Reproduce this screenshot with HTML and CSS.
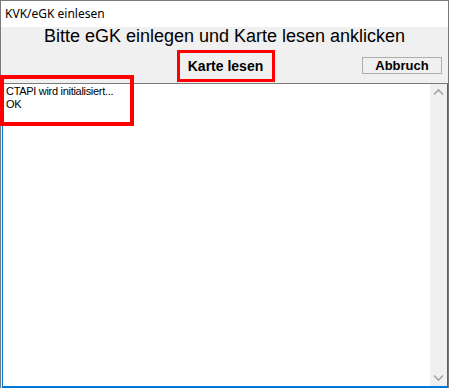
FILE: index.html
```html
<!DOCTYPE html>
<html lang="de">
<head>
  <meta charset="UTF-8">
  <title>KVK/eGK einlesen</title>
  <link rel="stylesheet" href="styles.css">
</head>
<body>
  <div class="window">
    <div class="titlebar">KVK/eGK einlesen</div>
    <div class="panel">
      <h1 class="prompt">Bitte eGK einlegen und Karte lesen anklicken</h1>
      <div class="actions">
        <button class="btn-read">Karte lesen</button>
        <button class="btn-cancel">Abbruch</button>
      </div>
    </div>
    <div class="log">
      <div class="log-text">
        <div>CTAPI wird initialisiert...</div>
        <div>OK</div>
      </div>
      <div class="scrollbar">
        <svg class="arrow" width="17" height="17" viewBox="0 0 17 17"><path d="M4 10.5 L8.5 6 L13 10.5" fill="none" stroke="#a3a3a3" stroke-width="1.6"/></svg>
        <svg class="arrow" width="17" height="17" viewBox="0 0 17 17"><path d="M4 6.5 L8.5 11 L13 6.5" fill="none" stroke="#a3a3a3" stroke-width="1.6"/></svg>
      </div>
    </div>
    <!-- markierung -->
    <div class="mark-log"></div>
  </div>
</body>
</html>
```

FILE: styles.css
```css
* { margin: 0; padding: 0; box-sizing: border-box; }
body {
  background: #fff;
  width: 449px;
  height: 388px;
  overflow: hidden;
}
.window {
  position: relative;
  width: 449px;
  height: 388px;
  border: 1px solid #7a7a7a;
  border-bottom: none;
  background: #f0f0f0;
  display: flex;
  flex-direction: column;
}
.titlebar {
  height: 26px;
  background: #fff;
  font-family: "Noto Sans", sans-serif;
  font-size: 12px;
  line-height: 26px;
  padding-left: 4px;
  color: #000;
}
.panel {
  height: 56px;
  background: #f0f0f0;
}
.prompt {
  font-family: "Liberation Sans", Arial, sans-serif;
  font-weight: 400;
  font-size: 18px;
  line-height: 18px;
  text-align: center;
  color: #000;
}
.actions {
  position: relative;
  display: flex;
  justify-content: center;
  height: 38px;
}
.btn-read {
  margin-top: 5px;
  margin-left: 2px;
  width: 98px;
  height: 32px;
  border: 3px solid #ff0000;
  background: #f0f0f0;
  font-family: "Liberation Sans", Arial, sans-serif;
  font-weight: 700;
  font-size: 14px;
  color: #000;
}
.btn-cancel {
  position: absolute;
  right: 6px;
  top: 12px;
  width: 80px;
  height: 17px;
  border: 1px solid #adadad;
  background: #f0f0f0;
  font-family: "Liberation Sans", Arial, sans-serif;
  font-weight: 700;
  font-size: 13px;
  line-height: 14px;
  color: #000;
}
.log {
  flex: 1;
  display: flex;
  background: #fff;
  border: 1px solid #0078d7;
  border-top-color: #7a7a7a;
  border-bottom-width: 2px;
  margin-left: 1px;
}
.log-text {
  flex: 1;
  padding: 1px 3px;
  font-family: "Liberation Sans", Arial, sans-serif;
  font-size: 11px;
  letter-spacing: -0.3px;
  line-height: 13px;
  color: #000;
}
.scrollbar {
  width: 17px;
  background: #f0f0f0;
  display: flex;
  flex-direction: column;
  justify-content: space-between;
}
.arrow { display: block; }
.mark-log {
  position: absolute;
  left: -1px;
  top: 74px;
  width: 134px;
  height: 51px;
  border: 4px solid #ff0000;
}
```
